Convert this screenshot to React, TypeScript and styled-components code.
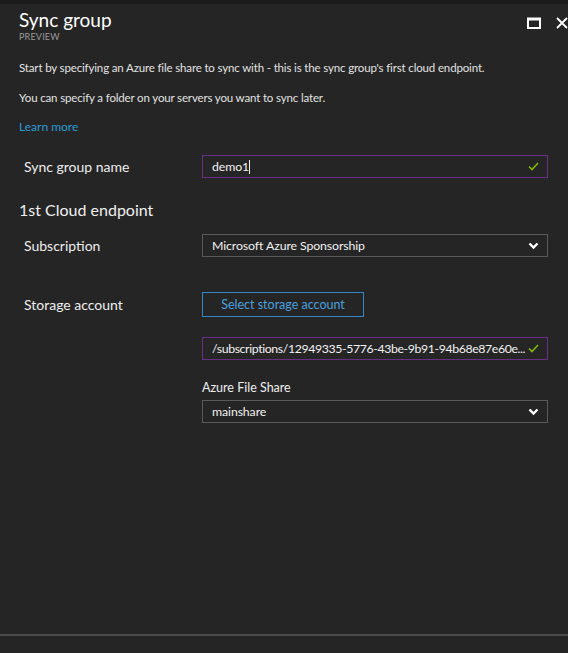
import React from "react";
import styled, { createGlobalStyle } from "styled-components";

const Global = createGlobalStyle`
  html, body { margin: 0; padding: 0; background: #252525; }
  body { font-family: Lato, "Open Sans", sans-serif; color: #e6e6e6; }
  * { box-sizing: border-box; }
`;

const Page = styled.div`
  width: 568px;
  height: 653px;
  background: #252525;
  display: flex;
  flex-direction: column;
  overflow: hidden;
`;

const TopStrip = styled.div`
  height: 4px;
  background: #1b1b1b;
  flex-shrink: 0;
`;

const Header = styled.div`
  display: flex;
  justify-content: space-between;
  align-items: flex-start;
  padding: 5px 0 0 19px;
  height: 56px;
`;

const TitleBlock = styled.div`
  display: flex;
  flex-direction: column;
`;

const Title = styled.div`
  font-size: 19px;
  line-height: 22px;
  color: #ffffff;
`;

const Sub = styled.div`
  font-size: 9px;
  line-height: 11px;
  color: #9a9a9a;
  letter-spacing: 0.2px;
`;

const Controls = styled.div`
  display: flex;
  align-items: center;
  gap: 15px;
  padding-top: 8px;
  margin-right: 0px;
`;

const Content = styled.div`
  flex: 1;
  padding: 0 20px 0 19px;
  display: flex;
  flex-direction: column;
`;

const Para = styled.p<{ $mb: number }>`
  margin: 0 0 ${(p) => p.$mb}px 0;
  font-size: 11.5px;
  line-height: 16px;
  letter-spacing: -0.15px;
  color: #e2e2e2;
`;

const LinkText = styled.a`
  font-size: 12px;
  line-height: 16px;
  color: #2b9bd6;
  text-decoration: none;
  margin-bottom: 20px;
`;

const Row = styled.div<{ $mb: number }>`
  display: grid;
  grid-template-columns: 183px 1fr;
  align-items: center;
  margin-bottom: ${(p) => p.$mb}px;
`;

const Label = styled.div`
  padding-left: 5px;
  font-size: 14px;
  color: #eeeeee;
`;

const Section = styled.div`
  font-size: 16px;
  line-height: 22px;
  color: #f0f0f0;
  margin-bottom: 13px;
`;

const Field = styled.div<{ $accent?: boolean }>`
  height: 23px;
  border: 1px solid ${(p) => (p.$accent ? "#6a2f86" : "#5a5a5a")};
  display: flex;
  align-items: center;
  gap: 6px;
  padding: 0 8px 0 9px;
  font-size: 12.3px;
  color: #f2f2f2;
  white-space: nowrap;
  overflow: hidden;
`;

const FieldText = styled.span<{ $tight?: boolean }>`
  flex: 1;
  min-width: 0;
  letter-spacing: ${(p) => (p.$tight ? "-0.38px" : "-0.1px")};
`;

const Caret = styled.span`
  display: inline-block;
  width: 1px;
  height: 14px;
  background: #f2f2f2;
  vertical-align: middle;
`;

const OutlineButton = styled.div`
  width: 162px;
  height: 25px;
  border: 1px solid #3289c9;
  color: #4aa0df;
  font-size: 12.5px;
  display: flex;
  align-items: center;
  justify-content: center;
`;

const SmallLabel = styled.div`
  font-size: 12.5px;
  line-height: 16px;
  color: #eeeeee;
  margin-bottom: 4px;
`;

const Stack = styled.div`
  display: flex;
  flex-direction: column;
`;

const Footer = styled.div`
  height: 2px;
  background: #4a4a4a;
  margin-bottom: 17px;
`;

const Check = () => (
  <svg width="11" height="9" viewBox="0 0 11 9">
    <path d="M1 4.5 L4 7.5 L10 1" stroke="#7fba00" strokeWidth="1.6" fill="none" />
  </svg>
);

const Chevron = () => (
  <svg width="11" height="8" viewBox="0 0 11 8">
    <path d="M1.5 1.5 L5.5 5.5 L9.5 1.5" stroke="#ffffff" strokeWidth="2.4" fill="none" />
  </svg>
);

const MaxIcon = () => (
  <svg width="14" height="12" viewBox="0 0 14 12">
    <rect x="1" y="1.5" width="12" height="9.5" stroke="#ffffff" strokeWidth="2" fill="none" />
    <rect x="1" y="1" width="12" height="2.5" fill="#ffffff" />
  </svg>
);

const CloseIcon = () => (
  <svg width="12" height="12" viewBox="0 0 12 12">
    <path d="M1 1 L11 11 M11 1 L1 11" stroke="#ffffff" strokeWidth="1.8" />
  </svg>
);

export default function App() {
  return (
    <Page>
      <Global />
      <TopStrip />
      <Header>
        <TitleBlock>
          <Title>Sync group</Title>
          <Sub>PREVIEW</Sub>
        </TitleBlock>
        <Controls>
          <MaxIcon />
          <CloseIcon />
        </Controls>
      </Header>
      <Content>
        <Para $mb={14}>
          Start by specifying an Azure file share to sync with - this is the sync group's first cloud endpoint.
        </Para>
        <Para $mb={13}>You can specify a folder on your servers you want to sync later.</Para>
        <LinkText href="#">Learn more</LinkText>
        <Row $mb={21}>
          <Label>Sync group name</Label>
          <Field $accent>
            <FieldText>
              demo1<Caret />
            </FieldText>
            <Check />
          </Field>
        </Row>
        <Section>1st Cloud endpoint</Section>
        <Row $mb={35}>
          <Label>Subscription</Label>
          <Field>
            <FieldText>Microsoft Azure Sponsorship</FieldText>
            <Chevron />
          </Field>
        </Row>
        <Row $mb={20}>
          <Label>Storage account</Label>
          <div>
            <OutlineButton>Select storage account</OutlineButton>
          </div>
        </Row>
        <Row $mb={20}>
          <div />
          <Field $accent>
            <FieldText $tight>/subscriptions/12949335-5776-43be-9b91-94b68e87e60e...</FieldText>
            <Check />
          </Field>
        </Row>
        <Row $mb={0}>
          <div />
          <Stack>
            <SmallLabel>Azure File Share</SmallLabel>
            <Field>
              <FieldText>mainshare</FieldText>
              <Chevron />
            </Field>
          </Stack>
        </Row>
      </Content>
      <Footer />
    </Page>
  );
}
